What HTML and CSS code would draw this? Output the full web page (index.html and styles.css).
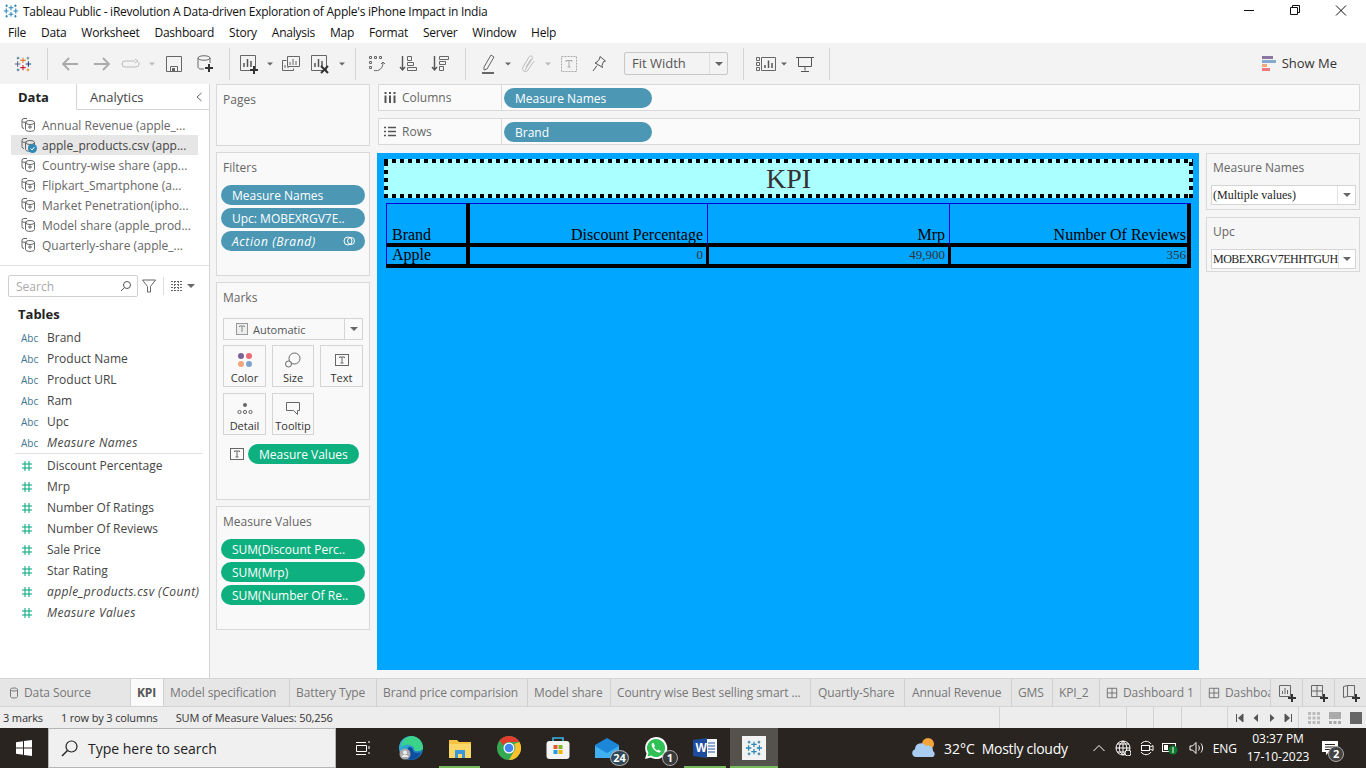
FILE: index.html
```html
<!DOCTYPE html>
<html lang="en">
<head>
    <meta charset="UTF-8">
    <title>Tableau Public - iRevolution</title>
    <link rel="stylesheet" href="styles.css">
</head>
<body>
    <svg class="defs" width="0" height="0">
        <symbol id="ds" viewBox="0 0 16 16">
            <g fill="none" stroke="#666" stroke-width="1">
                <path d="M7 1.500h-3a2 2 0 0 0-2 2v6a2 2 0 0 0 2 2"/>
                <path d="M2 4.500c1 1 3 1 5 .5"/>
                <ellipse cx="10" cy="5.500" rx="4.500" ry="2"/>
                <path d="M5.500 5.500v7c0 2.500 9 2.500 9 0v-7"/>
                <path d="M8 10h4M10 8v4"/>
            </g>
        </symbol>
        <symbol id="tlogo" viewBox="0 0 20 20">
            <g fill="none" stroke-width="1.200">
                <path d="M10 3v6M7 6h6" stroke="#e8762b"/>
                <path d="M10 11v6M7 14h6" stroke="#c72035"/>
                <path d="M4 7v6M1 10h6" stroke="#5b6591"/>
                <path d="M16 7v6M13 10h6" stroke="#1f447e"/>
                <path d="M4.500 2v3M3 3.500h3" stroke="#59879b"/>
                <path d="M15.500 2v3M14 3.500h3" stroke="#7099a6"/>
                <path d="M4.500 15v3M3 16.500h3" stroke="#5b879b"/>
                <path d="M15.500 15v3M14 16.500h3" stroke="#eb912b"/>
            </g>
        </symbol>
        <symbol id="tblue" viewBox="0 0 20 20">
            <g fill="none" stroke="#2f87b5" stroke-width="1.400">
                <path d="M10 3v6M7 6h6M10 11v6M7 14h6M4 7v6M1 10h6M16 7v6M13 10h6M4.500 2v3M3 3.500h3M15.500 2v3M14 3.500h3M4.500 15v3M3 16.500h3M15.500 15v3M14 16.500h3"/>
            </g>
        </symbol>
        <symbol id="hash" viewBox="0 0 12 12">
            <path d="M4 1v10M8 1v10M1 4h10M1 8h10" fill="none" stroke="#00a37a" stroke-width="1"/>
        </symbol>
        <symbol id="tbox" viewBox="0 0 16 16">
            <rect x="1.500" y="2.500" width="13" height="11" fill="none" stroke="#666"/>
            <path d="M5.500 6V5h5v1M8 5v6M6.500 11h3" fill="none" stroke="#666"/>
        </symbol>
        <symbol id="caret" viewBox="0 0 8 8">
            <path d="M0 2h8L4 6z" fill="#666"/>
        </symbol>
        <symbol id="dash" viewBox="0 0 14 14">
            <path d="M1.500 1.500h11v11h-11zM7 1.500v11M1.500 7h11" fill="none" stroke="#666"/>
        </symbol>
        <symbol id="plus" viewBox="0 0 8 8">
            <path d="M4 0v8M0 4h8" stroke="#333" stroke-width="2" fill="none"/>
        </symbol>
    </svg>

    <div class="titlebar">
        <svg class="title-logo" width="16" height="16"><use href="#tblue"/></svg>
        <span class="title-text">Tableau Public - iRevolution A Data-driven Exploration of Apple's iPhone Impact in India</span>
        <div class="win-btns">
            <svg width="46" height="22"><path d="M18 10.500h10" stroke="#111"/></svg>
            <svg width="46" height="22"><path d="M18.500 7.500h7v7h-7zM20.500 7.500v-2h7v7h-2" fill="none" stroke="#111"/></svg>
            <svg width="46" height="22"><path d="M18 5.500l10 10M28 5.500l-10 10" stroke="#111"/></svg>
        </div>
    </div>

    <div class="menubar">
        <span>File</span><span>Data</span><span>Worksheet</span><span>Dashboard</span><span>Story</span><span>Analysis</span><span>Map</span><span>Format</span><span>Server</span><span>Window</span><span>Help</span>
    </div>

    <div class="toolbar">
        <div class="tool w30"><svg width="18" height="18"><use href="#tlogo"/></svg></div>
        <div class="sep sep-a"></div>
        <div class="tool w32"><svg width="18" height="16"><path d="M17 8H2M8 2L2 8l6 6" fill="none" stroke="#aaa" stroke-width="1.800"/></svg></div>
        <div class="tool w32"><svg width="18" height="16"><path d="M1 8h15M10 2l6 6-6 6" fill="none" stroke="#aaa" stroke-width="1.800"/></svg></div>
        <div class="tool w26"><svg width="20" height="12"><path d="M14 3H4a3 3 0 0 0 0 6h11a3 3 0 0 0 3-3V4M14 1l3 2-3 2" fill="none" stroke="#bbb"/></svg></div>
        <div class="tool w16"><svg width="6" height="6"><use href="#caret" opacity=".4"/></svg></div>
        <div class="tool w28"><svg width="16" height="16"><path d="M.5.500h15v15H.5zM4.500 15.500v-5h7v5" fill="none" stroke="#666"/><rect x="6" y="12" width="3" height="3" fill="#666"/></svg></div>
        <div class="tool w34"><svg width="16" height="18"><path d="M1 3v9c0 1 1 2 3 2h3M13 3v5M1 3c0-3 12-3 12 0s-12 3-12 0z" fill="none" stroke="#666"/><path d="M12 9v8M8 13h8" stroke="#333" stroke-width="2"/></svg></div>
        <div class="sep"></div>
        <div class="tool w28"><svg width="20" height="20"><path d="M.5 1.500h15v15H.5z" fill="none" stroke="#666"/><path d="M4 13V9M7.500 13V5M11 13V7" stroke="#555" stroke-width="1.500"/><path d="M14 12v8M10 16h8" stroke="#333" stroke-width="2"/></svg></div>
        <div class="tool w12"><svg width="6" height="6"><use href="#caret"/></svg></div>
        <div class="tool w30"><svg width="18" height="16"><path d="M4.500 4.500h-4v10h11v-2M5.500.500h12v10h-12z" fill="none" stroke="#666"/><path d="M8 9V6M11 9V3M14 9V5M3 12V9M6 12v-1" stroke="#666"/></svg></div>
        <div class="tool w30"><svg width="20" height="20"><path d="M.5 1.500h15v15H.5z" fill="none" stroke="#666"/><path d="M4 13V9M7.500 13V5M11 13V7" stroke="#555" stroke-width="1.500"/><path d="M10 12l7 7M17 12l-7 7" stroke="#333" stroke-width="2"/></svg></div>
        <div class="tool w12"><svg width="6" height="6"><use href="#caret"/></svg></div>
        <div class="sep"></div>
        <div class="tool w30"><svg width="18" height="18"><path d="M1.500 1.500h2v2h-2zM6.500 1.500h2v2h-2zM11.500 1.500h2v2h-2zM1.500 6.500h2v2h-2zM1.500 11.500h2v2h-2zM6 15.500c5 1 9-2 9-8M13 9l2-2 2 2" fill="none" stroke="#666"/></svg></div>
        <div class="tool w32"><svg width="18" height="18"><path d="M3.500 1v14M1 12l2.500 3L6 12" fill="none" stroke="#555" stroke-width="1.400"/><path d="M8.500 1.500h4v4h-4zM8.500 7.500h6v3h-6zM8.500 12.500h9v3h-9z" fill="none" stroke="#666"/></svg></div>
        <div class="tool w32"><svg width="18" height="18"><path d="M3.500 1v14M1 12l2.500 3L6 12" fill="none" stroke="#555" stroke-width="1.400"/><path d="M8.500 1.500h9v3h-9zM8.500 6.500h6v3h-6zM8.500 11.500h4v4h-4z" fill="none" stroke="#666"/></svg></div>
        <div class="sep sep-b"></div>
        <div class="tool w28"><svg width="14" height="20"><path d="M3 13L10 1l3 2-7 12-3 1z" fill="none" stroke="#666"/><path d="M1 19h12" stroke="#666" stroke-width="2"/></svg></div>
        <div class="tool w12"><svg width="6" height="6"><use href="#caret"/></svg></div>
        <div class="tool w28"><svg width="14" height="18"><path d="M4 15L11 4c2-3-2-4-3-2L2 12c-2 4 3 6 5 3l6-9M5 12l5-8" fill="none" stroke="#bbb"/></svg></div>
        <div class="tool w12"><svg width="6" height="6"><use href="#caret" opacity=".4"/></svg></div>
        <div class="tool w30"><svg width="16" height="16"><rect x=".5" y=".5" width="15" height="15" fill="none" stroke="#aaa" stroke-dasharray="2 1"/><path d="M5 6V4.500h6V6M8 4.500V11M6.500 11h3" fill="none" stroke="#aaa"/></svg></div>
        <div class="tool w30"><svg width="14" height="16"><path d="M8 .500l5.500 4.500-2 .5-1.500 4 .5 2L6 8.500 3 7l2-1 2.500-3zM5 9.500L1 15" fill="none" stroke="#555"/></svg></div>
        <div class="fit-select"><span>Fit Width</span><i><svg width="8" height="8"><use href="#caret"/></svg></i></div>
        <div class="sep sep-c"></div>
        <div class="tool w24"><svg width="20" height="14"><path d="M.5.500h3v3h-3zM.5 5.500h3v3h-3zM.5 10.500h3v3h-3zM5.500.500h14v13h-14z" fill="none" stroke="#666"/><path d="M9 11V8M12.500 11V3.500M16 11V6" stroke="#555" stroke-width="1.500"/></svg></div>
        <div class="tool w12"><svg width="6" height="6"><use href="#caret"/></svg></div>
        <div class="tool w30"><svg width="18" height="16"><path d="M0 1.500h18M2.500 1.500v9h13v-9M9 10.500v4M5 15.500h8" fill="none" stroke="#555"/></svg></div>
        <div class="sep sep-b"></div>
        <div class="show-me">
            <svg width="14" height="16"><rect y="0" width="11" height="3" fill="#8a75a3"/><rect y="4" width="14" height="3" fill="#84a9cf"/><rect y="8" width="5" height="3" fill="#f2a679"/><rect y="12" width="8" height="3" fill="#f0787f"/></svg>
            <span>Show Me</span>
        </div>
    </div>

    <div class="main">
        <aside class="side">
            <div class="side-tabs">
                <div class="side-tab active">Data</div>
                <div class="side-tab">Analytics</div>
                <svg width="8" height="10" class="collapse"><path d="M6.500 1L2 5l4.500 4" fill="none" stroke="#666"/></svg>
            </div>
            <ul class="sources">
                <li><svg width="16" height="16"><use href="#ds"/></svg>Annual Revenue (apple_...</li>
                <li class="current"><svg width="16" height="16"><use href="#ds"/></svg><svg class="tick" width="9" height="9"><circle cx="4.500" cy="4.500" r="4.500" fill="#2f87b5"/><path d="M2.500 4.500l1.500 1.500 2.500-3" fill="none" stroke="#fff"/></svg>apple_products.csv (app...</li>
                <li><svg width="16" height="16"><use href="#ds"/></svg>Country-wise share (app...</li>
                <li><svg width="16" height="16"><use href="#ds"/></svg>Flipkart_Smartphone (a...</li>
                <li><svg width="16" height="16"><use href="#ds"/></svg>Market Penetration(ipho...</li>
                <li><svg width="16" height="16"><use href="#ds"/></svg>Model share (apple_prod...</li>
                <li><svg width="16" height="16"><use href="#ds"/></svg>Quarterly-share (apple_...</li>
            </ul>
            <div class="search-row">
                <div class="search"><span>Search</span><svg width="12" height="12"><circle cx="7" cy="5" r="3.500" fill="none" stroke="#555"/><path d="M4.500 7.500L1 11" stroke="#555"/></svg></div>
                <svg width="14" height="14"><path d="M.5 1h13L8.500 7.500V13h-3V7.500z" fill="none" stroke="#666"/></svg>
                <i class="search-sep"></i>
                <svg width="12" height="10"><path d="M0 .5h12M0 3.500h12M0 6.500h12M0 9.500h12M3.500 0v10M7.500 0v10" stroke="#666" stroke-dasharray="2 1" fill="none"/></svg>
                <svg width="8" height="8"><use href="#caret"/></svg>
            </div>
            <h3 class="tables">Tables</h3>
            <ul class="fields">
                <li><span class="abc">Abc</span>Brand</li>
                <li><span class="abc">Abc</span>Product Name</li>
                <li><span class="abc">Abc</span>Product URL</li>
                <li><span class="abc">Abc</span>Ram</li>
                <li><span class="abc">Abc</span>Upc</li>
                <li class="it"><span class="abc">Abc</span>Measure Names</li>
            </ul>
            <ul class="fields measures">
                <li><span class="num"><svg width="12" height="12"><use href="#hash"/></svg></span>Discount Percentage</li>
                <li><span class="num"><svg width="12" height="12"><use href="#hash"/></svg></span>Mrp</li>
                <li><span class="num"><svg width="12" height="12"><use href="#hash"/></svg></span>Number Of Ratings</li>
                <li><span class="num"><svg width="12" height="12"><use href="#hash"/></svg></span>Number Of Reviews</li>
                <li><span class="num"><svg width="12" height="12"><use href="#hash"/></svg></span>Sale Price</li>
                <li><span class="num"><svg width="12" height="12"><use href="#hash"/></svg></span>Star Rating</li>
                <li class="it"><span class="num"><svg width="12" height="12"><use href="#hash"/></svg></span>apple_products.csv (Count)</li>
                <li class="it"><span class="num"><svg width="12" height="12"><use href="#hash"/></svg></span>Measure Values</li>
            </ul>
        </aside>

        <div class="cards">
            <section class="card pages"><h4>Pages</h4></section>
            <section class="card filters">
                <h4>Filters</h4>
                <div class="pill blue">Measure Names</div>
                <div class="pill blue">Upc: MOBEXRGV7E..</div>
                <div class="pill blue it">Action (Brand)<svg width="12" height="12"><circle cx="5" cy="6" r="4" fill="none" stroke="#fff"/><circle cx="8" cy="6" r="3.500" fill="none" stroke="#fff"/></svg></div>
            </section>
            <section class="card marks">
                <h4>Marks</h4>
                <div class="mark-select">
                    <svg width="12" height="12"><rect x=".5" y=".5" width="11" height="11" fill="#eee" stroke="#999"/><path d="M3.500 4V3h5v1M6 3v6" stroke="#888" fill="none"/></svg>
                    <span>Automatic</span>
                    <i><svg width="8" height="8"><use href="#caret"/></svg></i>
                </div>
                <div class="mark-grid">
                    <div class="mark-btn"><svg width="16" height="16"><circle cx="4" cy="4" r="3" fill="#7b6294"/><circle cx="12" cy="4" r="3" fill="#ee6a78"/><circle cx="4" cy="12" r="3" fill="#f2a679"/><circle cx="12" cy="12" r="3" fill="#7da3cf"/></svg><span>Color</span></div>
                    <div class="mark-btn"><svg width="16" height="16"><circle cx="9.500" cy="6.500" r="5.500" fill="#f9f9f9" stroke="#666"/><circle cx="3.500" cy="12" r="3" fill="#f9f9f9" stroke="#666"/></svg><span>Size</span></div>
                    <div class="mark-btn"><svg width="16" height="16"><use href="#tbox"/></svg><span>Text</span></div>
                    <div class="mark-btn"><svg width="16" height="16"><circle cx="8" cy="5" r="2" fill="#666"/><circle cx="2.500" cy="12" r="1.600" fill="none" stroke="#666"/><circle cx="8" cy="12" r="1.600" fill="none" stroke="#666"/><circle cx="13.500" cy="12" r="1.600" fill="none" stroke="#666"/></svg><span>Detail</span></div>
                    <div class="mark-btn"><svg width="16" height="16"><path d="M1.500 2.500h13v8h-2v4l-4-4h-7z" fill="none" stroke="#666"/></svg><span>Tooltip</span></div>
                </div>
                <div class="mark-pill">
                    <svg width="16" height="16"><use href="#tbox"/></svg>
                    <div class="pill green">Measure Values</div>
                </div>
            </section>
            <section class="card values">
                <h4>Measure Values</h4>
                <div class="pill green">SUM(Discount Perc..</div>
                <div class="pill green">SUM(Mrp)</div>
                <div class="pill green">SUM(Number Of Re..</div>
            </section>
        </div>

        <div class="work">
            <div class="shelf">
                <div class="shelf-label"><svg width="12" height="11"><path d="M1.500 0v2M6 0v2M10.500 0v2M1.500 3.500V11M6 3.500V11M10.500 3.500V11" stroke="#555" stroke-width="2"/></svg>Columns</div>
                <div class="shelf-body"><div class="pill blue wide">Measure Names</div></div>
            </div>
            <div class="shelf">
                <div class="shelf-label"><svg width="12" height="11"><path d="M0 1.500h2M4 1.500h8M0 5.500h2M4 5.500h8M0 9.500h2M4 9.500h8" stroke="#555" stroke-width="1.600"/></svg>Rows</div>
                <div class="shelf-body"><div class="pill blue wide">Brand</div></div>
            </div>
            <div class="work-body">
                <div class="view">
                    <div class="view-title">KPI</div>
                    <div class="kpi">
                        <div class="hd col-a">Brand</div>
                        <div class="hd col-b right">Discount Percentage</div>
                        <div class="hd col-c right">Mrp</div>
                        <div class="hd col-d right">Number Of Reviews</div>
                        <div class="cell col-a big">Apple</div>
                        <div class="cell col-b right">0</div>
                        <div class="cell col-c right">49,900</div>
                        <div class="cell col-d right">356</div>
                    </div>
                </div>
                <div class="right-cards">
                    <section class="card qf">
                        <h4>Measure Names</h4>
                        <div class="qf-select"><span>(Multiple values)</span><i><svg width="8" height="8"><use href="#caret"/></svg></i></div>
                    </section>
                    <section class="card qf">
                        <h4>Upc</h4>
                        <div class="qf-select"><span class="qf-code">MOBEXRGV7EHHTGUH</span><i><svg width="8" height="8"><use href="#caret"/></svg></i></div>
                    </section>
                </div>
            </div>
        </div>
    </div>

    <div class="tabs">
        <div class="tab t-source"><svg width="12" height="12"><path d="M2.500 2.500v7c0 2 7 2 7 0v-7M2.500 2.500c0-2 7-2 7 0s-7 2-7 0z" fill="none" stroke="#777"/></svg>Data Source</div>
        <div class="tab t-kpi active">KPI</div>
        <div class="tab t-model">Model specification</div>
        <div class="tab t-batt">Battery Type</div>
        <div class="tab t-brand">Brand price comparision</div>
        <div class="tab t-share">Model share</div>
        <div class="tab t-country">Country wise Best selling smart ...</div>
        <div class="tab t-quart">Quartly-Share</div>
        <div class="tab t-annual">Annual Revenue</div>
        <div class="tab t-gms">GMS</div>
        <div class="tab t-kpi2">KPI_2</div>
        <div class="tab t-dash"><svg width="12" height="12"><use href="#dash"/></svg>Dashboard 1</div>
        <div class="tab t-dash2"><svg width="12" height="12"><use href="#dash"/></svg>Dashboard 2</div>
        <div class="tab-add"><svg width="18" height="18"><path d="M1.500 1.500h11v11h-11zM4.500 10V7M7 10V4M9.500 10V6" fill="none" stroke="#666"/><use href="#plus" x="10" y="10" width="8" height="8"/></svg></div>
        <div class="tab-add"><svg width="18" height="18"><path d="M1.500 1.500h11v11h-11zM7 1.500v11M1.500 7h11" fill="none" stroke="#666"/><use href="#plus" x="10" y="10" width="8" height="8"/></svg></div>
        <div class="tab-add"><svg width="18" height="18"><path d="M1.500 2.500l4-1v11l-4 1zM5.500 1.500h7v11h-7" fill="none" stroke="#666"/><use href="#plus" x="10" y="10" width="8" height="8"/></svg></div>
    </div>

    <div class="status">
        <div class="st-text">
            <span>3 marks</span>
            <span>1 row by 3 columns</span>
            <span>SUM of Measure Values: 50,256</span>
        </div>
        <div class="st-cell c127"></div>
        <div class="st-cell c27"></div>
        <div class="st-cell c28"></div>
        <div class="st-cell c46"></div>
        <div class="st-cell pager">
            <svg width="10" height="10"><path d="M1.500 1v8M8 1v8L3.500 5z" stroke="#555" fill="#555"/></svg>
            <svg width="10" height="10"><path d="M7 1v8L2.500 5z" fill="#555"/></svg>
            <svg width="10" height="10"><path d="M3 1v8l4.500-4z" fill="#555"/></svg>
            <svg width="10" height="10"><path d="M8.500 1v8M2 1v8l4.500-4z" stroke="#555" fill="#555"/></svg>
        </div>
        <div class="st-cell sizes">
            <svg width="12" height="12"><path d="M0 0h3v3H0zM4.500 0h3v3h-3zM9 0h3v3H9zM0 4.500h3v3H0zM4.500 4.500h3v3h-3zM9 4.500h3v3H9zM0 9h3v3H0zM4.500 9h3v3h-3zM9 9h3v3H9z" fill="#bbb"/></svg>
            <svg width="12" height="12"><path d="M0 0h12v7H0zM0 9h3v3H0zM4.500 9h3v3h-3zM9 9h3v3H9z" fill="#aaa"/></svg>
            <svg width="12" height="12"><rect width="12" height="12" fill="#666"/></svg>
        </div>
    </div>

    <div class="taskbar">
        <div class="start"><svg width="16" height="16"><path d="M0 2.200l7-1v6.300H0zM8 1l8-1v7.500H8zM0 8.500h7v6.300l-7-1zM8 8.500h8V16l-8-1z" fill="#fff"/></svg></div>
        <div class="task-search">
            <svg width="17" height="17"><circle cx="10.500" cy="6.500" r="5.500" fill="none" stroke="#222" stroke-width="1.200"/><path d="M6.500 10.500L1 16" stroke="#222" stroke-width="1.400"/></svg>
            <span>Type here to search</span>
        </div>
        <div class="task-icons">
            <div class="task-app"><svg width="16" height="16"><path d="M1 2.500h10M1 14.500h10M1.500 5.500h10v6h-10zM14 1v2M14 6v3M14 12v2" fill="none" stroke="#fff"/></svg></div>
            <div class="task-app a-edge"><svg width="24" height="24"><defs><linearGradient id="eg" x1="0" y1="0" x2="1" y2="1"><stop offset="0" stop-color="#37c4d8"/><stop offset="1" stop-color="#1a66c0"/></linearGradient></defs><circle cx="12" cy="12" r="12" fill="url(#eg)"/><path d="M12 0a12 12 0 0 1 12 13c-3 3-9 3-9 0 0-4-8-6-13-2A12 12 0 0 1 12 0z" fill="#3bd28a"/><path d="M10 11c3 0 4 2 4 3 0 3 5 4 8 2a12 12 0 0 1-10 8c-5 0-6-9-2-13z" fill="#0f4d9e"/><circle cx="6" cy="18" r="5.500" fill="#aaa"/><circle cx="6" cy="16.500" r="2" fill="#eee"/><path d="M2.500 21c1-3 6-3 7 0z" fill="#eee"/></svg></div>
            <div class="task-app on"><svg width="22" height="20"><path d="M0 2h8l2 2h12v16H0z" fill="#f5c242"/><path d="M0 6h22v14H0z" fill="#fbd768"/><path d="M6 12h10v8h-3v-4H9v4H6z" fill="#3a98d8"/></svg></div>
            <div class="task-app"><svg width="24" height="24"><circle cx="12" cy="12" r="12" fill="#34a853"/><path d="M12 0a12 12 0 0 1 10.400 6H12a6 6 0 0 0-5.600 3.600L2.600 4.600A12 12 0 0 1 12 0z" fill="#e33b2e"/><path d="M22.400 6A12 12 0 0 1 12 24l5.200-9A6 6 0 0 0 17 8z" fill="#fbc02d"/><circle cx="12" cy="12" r="5.500" fill="#fff"/><circle cx="12" cy="12" r="4.300" fill="#4285f4"/></svg></div>
            <div class="task-app"><svg width="24" height="24"><path d="M7 5V2h10v3" fill="none" stroke="#38b4e8" stroke-width="1.600"/><rect x="0.500" y="5" width="23" height="18" rx="3" fill="#f4f4f4"/><rect x="7.500" y="9" width="4" height="4" fill="#e8562e"/><rect x="12.500" y="9" width="4" height="4" fill="#7cb82f"/><rect x="7.500" y="14" width="4" height="4" fill="#1f9de0"/><rect x="12.500" y="14" width="4" height="4" fill="#f4b400"/></svg></div>
            <div class="task-app"><svg width="24" height="20"><path d="M0 7l12-7 12 7v13H0z" fill="#1c86d8"/><path d="M0 8l12 7 12-7v12H0z" fill="#3fb0f0"/></svg><b class="count">24</b></div>
            <div class="task-app"><svg width="24" height="24"><path d="M12 1a11 11 0 0 0-9.400 16.500L1 23l5.700-1.500A11 11 0 1 0 12 1z" fill="#fff"/><path d="M12 3a9 9 0 0 0-7.500 14l-1 3.500 3.600-1A9 9 0 1 0 12 3z" fill="#2fc155"/><path d="M8.500 7c-2 2 0 5 2 7s5 3.500 6.500 1.500l-2.500-2-1 1c-1.500-.5-3-2-3.500-3.500l1-1-1.500-3z" fill="#fff"/></svg><b class="count small">1</b></div>
            <div class="task-app a-word on"><svg width="24" height="20"><rect x="8" y="1" width="16" height="18" fill="#f4f6fb"/><path d="M15 5h7M15 8h7M15 11h7M15 14h7" stroke="#2b5caa"/><path d="M0 2l14-2v20L0 18z" fill="#1e4c9c"/><text x="2.500" y="14" class="w-letter">W</text></svg></div>
            <div class="task-app a-tab on"><div class="tab-tile"><svg width="18" height="18"><use href="#tblue"/></svg></div></div>
        </div>
        <div class="tray">
            <svg class="tr-weather" width="24" height="22"><circle cx="16" cy="7" r="6" fill="#f2a33a"/><path d="M4 20a4 4 0 0 1-1-7.800A6 6 0 0 1 14 9a5 5 0 0 1 7 5 3.500 3.500 0 0 1 0 6z" fill="#a9cdf0"/></svg>
            <span class="tr-temp">32°C</span>
            <span class="tr-cond">Mostly cloudy</span>
            <svg class="tr-chev" width="12" height="8"><path d="M.5 7L6 1.500 11.500 7" fill="none" stroke="#fff"/></svg>
            <svg class="tr-globe" width="16" height="16"><circle cx="8" cy="8" r="7" fill="none" stroke="#fff"/><path d="M1 8h14M8 1v14M2 4h12M2 12h12M8 1c-5 4-5 10 0 14M8 1c5 4 5 10 0 14" fill="none" stroke="#fff"/><circle cx="13" cy="13" r="3" fill="#2a2420" stroke="#fff"/></svg>
            <svg class="tr-meet" width="14" height="16"><path d="M1 4a6 6 0 0 1 10 0M1 12a6 6 0 0 0 10 0" fill="none" stroke="#fff"/><rect x="1.500" y="5.500" width="8" height="5" fill="none" stroke="#fff"/><path d="M10 7l3-1.500v5L10 9" fill="none" stroke="#fff"/></svg>
            <svg class="tr-batt" width="16" height="14"><rect x=".5" y="2.500" width="13" height="8" fill="none" stroke="#fff"/><rect x="2" y="4" width="4" height="5" fill="#fff"/><circle cx="11" cy="9" r="4.500" fill="#0c7a2e"/><path d="M11 6v6" stroke="#fff"/></svg>
            <svg class="tr-sound" width="16" height="14"><path d="M1 5h2.500L7 1.500v11L3.500 9H1zM9.500 4.500c1 1.500 1 3.500 0 5M12 2.500c2 3 2 6 0 9" fill="none" stroke="#fff"/></svg>
            <span class="tr-lang">ENG</span>
            <div class="tr-clock"><span>03:37 PM</span><span>17-10-2023</span></div>
            <div class="tr-note"><svg width="16" height="15"><path d="M0 0h16v11H7l-3 3v-3H0z" fill="#fff"/><path d="M3 3.500h10M3 6h10M3 8.500h6" stroke="#2a2420"/></svg><b class="count note">2</b></div>
        </div>
    </div>
</body>
</html>
```

FILE: styles.css
```css
* {
    box-sizing: border-box;
}
html, body {
    margin: 0;
    height: 768px;
    overflow: hidden;
}
body {
    width: 1366px;
    display: flex;
    flex-direction: column;
    background-color: #f5f5f5;
    font-family: "Open Sans", "Liberation Sans", sans-serif;
    font-size: 13px;
    color: #333;
}
ul {
    list-style: none;
    margin: 0;
    padding: 0;
}
h3, h4 {
    margin: 0;
}
i, b {
    font-style: normal;
}
svg {
    display: block;
    flex: none;
}
.defs {
    position: absolute;
}
.it {
    font-style: italic;
    letter-spacing: .4px;
}

/* title + menu */
.titlebar {
    height: 22px;
    display: flex;
    align-items: center;
    padding-left: 3px;
    background-color: #fff;
}
.title-logo {
    margin-right: 4px;
}
.title-text {
    font-size: 12px;
    letter-spacing: -.25px;
    color: #111;
    white-space: nowrap;
}
.win-btns {
    display: flex;
    margin-left: auto;
    margin-right: 2px;
}
.menubar {
    height: 21px;
    display: flex;
    align-items: center;
    gap: 15px;
    padding-left: 8px;
    background-color: #fff;
    font-size: 12px;
    letter-spacing: -.25px;
    color: #111;
}

/* toolbar */
.toolbar {
    height: 41px;
    display: flex;
    align-items: center;
    padding-left: 8px;
    background-color: #f3f3f3;
}
.tool {
    height: 30px;
    display: flex;
    align-items: center;
    justify-content: center;
    flex: none;
}
.w12 { width: 12px; }
.w16 { width: 16px; }
.w24 { width: 24px; }
.w26 { width: 26px; }
.w28 { width: 28px; }
.w30 { width: 30px; }
.w32 { width: 32px; }
.w34 { width: 34px; }
.sep {
    width: 1px;
    height: 32px;
    flex: none;
    margin: 0 6px 0 7px;
    background-color: #d4d4d4;
}
.sep-a {
    margin-left: 9px;
}
.sep-b {
    margin-left: 9px;
    margin-right: 8px;
}
.sep-c {
    margin: 0 10px 0 15px;
}
.fit-select {
    width: 104px;
    height: 23px;
    margin-left: 10px;
    display: flex;
    align-items: center;
    border: 1px solid #c8c8c8;
    border-radius: 2px;
    padding-left: 7px;
    color: #555;
}
.fit-select span {
    flex: 1;
    margin-top: -2px;
}
.fit-select i {
    width: 18px;
    height: 100%;
    border-left: 1px solid #ddd;
    display: flex;
    align-items: center;
    justify-content: center;
}
.show-me {
    margin-left: auto;
    margin-right: 29px;
    display: flex;
    align-items: center;
    gap: 6px;
}
.show-me span {
    margin-top: -2px;
}

/* main */
.main {
    height: 594px;
    display: flex;
}
.side {
    width: 210px;
    flex: none;
    background-color: #fff;
    border-right: 1px solid #d4d4d4;
}
.side-tabs {
    height: 26px;
    display: flex;
    align-items: center;
    border-bottom: 1px solid #d4d4d4;
}
.side-tab {
    height: 26px;
    padding-top: 4px;
    font-size: 13px;
}
.side-tab.active {
    width: 77px;
    padding-left: 18px;
    font-weight: 700;
    border-right: 1px solid #d4d4d4;
    border-bottom: 1px solid #fff;
    background-color: #fff;
    color: #222;
}
.side-tab:not(.active) {
    padding-left: 13px;
    color: #444;
}
.collapse {
    margin-left: auto;
    margin-right: 6px;
}
.sources {
    padding: 5px 0 0 11px;
    height: 156px;
    border-bottom: 1px solid #e2e2e2;
    width: 209px;
    font-size: 12px;
    color: #666;
}
.sources li {
    position: relative;
    height: 20px;
    width: 187px;
    display: flex;
    align-items: center;
    gap: 6px;
    padding-left: 9px;
    white-space: nowrap;
}
.sources li.current {
    background-color: #e6e6e6;
    color: #444;
}
.tick {
    position: absolute;
    left: 17px;
    top: 9px;
}
.search-row {
    height: 22px;
    margin: 9px 0 0 8px;
    display: flex;
    align-items: center;
    gap: 4px;
}
.search {
    width: 130px;
    height: 22px;
    display: flex;
    align-items: center;
    justify-content: space-between;
    padding: 0 5px 0 7px;
    border: 1px solid #cfcfcf;
    border-radius: 2px;
    color: #aaa;
    font-size: 12px;
}
.search-sep {
    width: 1px;
    height: 18px;
    margin: 0 3px;
    background-color: #ddd;
}
.tables {
    margin: 8px 0 4px 18px;
    font-size: 13px;
    line-height: 18px;
    font-weight: 700;
    color: #222;
}
.fields {
    font-size: 12px;
    color: #444;
}
.fields li {
    height: 21px;
    display: flex;
    align-items: center;
    padding-left: 21px;
    white-space: nowrap;
}
.fields.measures {
    padding-top: 1px;
    border-top: 1px solid #e2e2e2;
    margin-left: 15px;
    margin-right: 6px;
}
.fields.measures li {
    padding-left: 6px;
}
.abc {
    width: 26px;
    font-size: 10px;
    font-style: normal;
    letter-spacing: 0;
    color: #3f7690;
}
.num {
    width: 26px;
}

/* shelves and cards */
.cards {
    width: 167px;
    flex: none;
    padding-left: 6px;
    display: flex;
    flex-direction: column;
    gap: 6px;
}
.card {
    width: 154px;
    background-color: #f9f9f9;
    border: 1px solid #d9d9d9;
    padding: 7px 4px 0 6px;
}
.card h4 {
    font-size: 12px;
    font-weight: 400;
    color: #666;
    line-height: 16px;
}
.pages {
    height: 62px;
}
.filters {
    height: 124px;
}
.filters h4 {
    margin-bottom: 9px;
}
.marks {
    height: 218px;
}
.values {
    height: 124px;
}
.values h4 {
    margin-bottom: 9px;
}
.pill {
    height: 20px;
    border-radius: 10px;
    padding: 0 0 0 11px;
    display: flex;
    align-items: center;
    justify-content: space-between;
    color: #fff;
    font-size: 12px;
    margin: 0 0 3px -2px;
    white-space: nowrap;
}
.pill.it {
    letter-spacing: .6px;
}
.pill svg {
    margin-right: 10px;
}
.blue {
    background-color: #4b97b4;
}
.green {
    background-color: #0fb07f;
}
.mark-select {
    width: 140px;
    height: 22px;
    margin: 12px 0 5px 0;
    display: flex;
    align-items: center;
    border: 1px solid #d4d4d4;
    padding-left: 12px;
    font-size: 11px;
    color: #555;
}
.mark-select span {
    flex: 1;
    margin-left: 5px;
}
.mark-select i {
    width: 18px;
    height: 100%;
    border-left: 1px solid #d4d4d4;
    display: flex;
    align-items: center;
    justify-content: center;
}
.mark-grid {
    display: grid;
    grid-template-columns: 43px 42px 43px;
    grid-auto-rows: 42px;
    column-gap: 6px;
    row-gap: 6px;
}
.mark-btn {
    display: flex;
    flex-direction: column;
    align-items: center;
    padding-top: 6px;
    border: 1px solid #d4d4d4;
    font-size: 11px;
    color: #333;
}
.mark-btn span {
    margin-top: 3px;
    line-height: 14px;
}
.mark-pill {
    display: flex;
    align-items: center;
    gap: 3px;
    margin: 9px 0 0 6px;
}
.mark-pill .pill {
    width: 111px;
    margin: 0;
}

.work {
    flex: 1;
    min-width: 0;
    padding-right: 6px;
}
.shelf {
    height: 27px;
    margin-left: 1px;
    margin-bottom: 7px;
    display: flex;
    background-color: #fafafa;
    border: 1px solid #d9d9d9;
}
.shelf-label {
    width: 123px;
    display: flex;
    align-items: center;
    gap: 6px;
    padding-left: 5px;
    border-right: 1px solid #d9d9d9;
    font-size: 12px;
    color: #666;
}
.shelf-body {
    padding: 3px 0 0 2px;
}
.wide {
    width: 148px;
    margin: 0;
}
.work-body {
    display: flex;
    gap: 7px;
    margin-top: 8px;
    height: 517px;
}
.view {
    width: 822px;
    flex: none;
    padding: 6px 6px 6px 7px;
    background-color: #00a6ff;
    font-family: "Liberation Serif", serif;
    color: #000;
}
/* square dots, a dotted border would draw them round */
.view-title {
    height: 39px;
    background-color: #aaffff;
    background-image:
        repeating-linear-gradient(90deg, #000 0 4px, transparent 4px 8px),
        repeating-linear-gradient(90deg, #000 0 4px, transparent 4px 8px),
        repeating-linear-gradient(0deg, #000 0 4px, transparent 4px 8px),
        repeating-linear-gradient(0deg, #000 0 4px, transparent 4px 8px);
    background-size: 100% 4px, 100% 4px, 4px 100%, 4px 100%;
    background-position: 0 0, 0 100%, 0 0, 100% 0;
    background-repeat: no-repeat;
    text-align: center;
    font-size: 28px;
    line-height: 39px;
    color: #333;
}
.kpi {
    margin: 5px 0 0 2px;
    width: 805px;
    height: 65px;
    display: grid;
    grid-template-columns: 84px 238px 242px 241px;
    grid-template-rows: 44px 17px;
    border-bottom: 4px solid #000;
    border-right: 4px solid #000;
}
.hd {
    height: 44px;
    padding: 0 4px 0 5px;
    display: flex;
    align-items: flex-end;
    font-size: 16px;
    line-height: 17px;
    border-top: 1px solid #0000e0;
    border-right: 1px solid #0000e0;
    border-bottom: 4px solid #000;
}
.hd.col-a {
    border-left: 1px solid #0000e0;
    border-right: 4px solid #000;
}
.hd.col-d {
    border-right: 0;
    padding-right: 5px;
}
.cell {
    height: 17px;
    padding: 0 3px 0 5px;
    margin-right: -1px;
    font-size: 13px;
    line-height: 16px;
    color: #333;
    border-right: 3px solid #000;
}
.cell.col-a {
    margin-right: 0;
    border-left: 1px solid #0000e0;
    border-right: 4px solid #000;
}
.cell.col-d {
    margin-right: 0;
    border-right: 0;
    padding-right: 5px;
}
.big {
    font-size: 16px;
    color: #000;
}
.right {
    justify-content: flex-end;
    text-align: right;
}
.right-cards {
    display: flex;
    flex-direction: column;
    gap: 7px;
}
.qf {
    padding: 6px 3px 0 6px;
    background-color: #f6f6f6;
    height: 57px;
}
.qf + .qf {
    height: 55px;
}
.qf-select {
    width: 145px;
    height: 20px;
    margin: 9px 0 0 -2px;
    display: flex;
    align-items: center;
    padding-left: 1px;
    background-color: #fff;
    border: 1px solid #d4d4d4;
    font-family: "Liberation Serif", serif;
    font-size: 12px;
    color: #222;
    white-space: nowrap;
}
.qf-select span {
    flex: 1;
}
.qf-select .qf-code {
    letter-spacing: -.5px;
}
.qf-select i {
    width: 18px;
    height: 100%;
    border-left: 1px solid #e4e4e4;
    display: flex;
    align-items: center;
    justify-content: center;
}

/* sheet tabs */
.tabs {
    height: 29px;
    display: flex;
    background-color: #e6e6e6;
    border-top: 1px solid #d4d4d4;
    border-bottom: 1px solid #d4d4d4;
    font-size: 12px;
    letter-spacing: -.1px;
    color: #777;
}
.tab {
    display: flex;
    align-items: center;
    gap: 5px;
    padding-left: 6px;
    border-right: 1px solid #d0d0d0;
    white-space: nowrap;
    overflow: hidden;
    flex: none;
}
.tab.active {
    background-color: #fafafa;
    font-weight: 700;
    color: #555;
}
.t-source { width: 131px; padding-left: 8px; gap: 4px; }
.t-kpi { width: 33px; }
.t-model { width: 126px; }
.t-batt { width: 87px; }
.t-brand { width: 151px; }
.t-share { width: 83px; }
.t-country { width: 200px; }
.t-quart { width: 94px; padding-left: 7px; }
.t-annual { width: 107px; padding-left: 7px; }
.t-gms { width: 41px; }
.t-kpi2 { width: 47px; }
.t-dash { width: 101px; }
.t-dash2 { width: 69px; padding-left: 7px; border-right: 0; }
.tab-add {
    width: 32px;
    display: flex;
    align-items: center;
    justify-content: center;
    border-left: 1px solid #d0d0d0;
}

/* status bar */
.status {
    height: 21px;
    display: flex;
    background-color: #ededed;
    font-size: 11px;
    letter-spacing: -.15px;
    color: #333;
}
.st-text {
    width: 999px;
    flex: none;
    display: flex;
    align-items: center;
    gap: 18px;
    padding-left: 3px;
    white-space: nowrap;
}
.st-cell {
    flex: none;
    border-left: 1px solid #d4d4d4;
}
.c127 { width: 127px; }
.c27 { width: 27px; }
.c28 { width: 28px; }
.c46 { width: 46px; }
.pager {
    width: 71px;
    display: flex;
    align-items: center;
    gap: 6px;
    padding-left: 7px;
}
.sizes {
    flex: 1;
    display: flex;
    align-items: center;
    gap: 9px;
    padding-left: 9px;
}

/* windows taskbar */
.taskbar {
    height: 40px;
    display: flex;
    align-items: center;
    background-color: #2a2420;
    color: #fff;
}
.start {
    width: 48px;
    height: 40px;
    flex: none;
    display: flex;
    align-items: center;
    justify-content: center;
}
.task-search {
    width: 288px;
    height: 40px;
    flex: none;
    display: flex;
    align-items: center;
    gap: 10px;
    padding-left: 12px;
    background-color: #f0f0f0;
    border: 1px solid #b5b5b5;
    color: #222;
    font-size: 14px;
}
.task-icons {
    flex: none;
    display: flex;
    margin-left: 2px;
}
.task-app {
    width: 49px;
    height: 40px;
    display: flex;
    align-items: center;
    justify-content: center;
    position: relative;
}
.task-app.on::after {
    content: "";
    position: absolute;
    left: 4px;
    right: 4px;
    bottom: 0;
    height: 2px;
    background-color: #76b95b;
}
.a-edge {
    width: 48px;
}
.a-word {
    width: 50px;
}
.a-tab {
    width: 48px;
    background-color: #55514c;
}
.a-tab.on::after {
    left: 0;
    right: 0;
}
.tab-tile {
    width: 24px;
    height: 24px;
    background-color: #f2f2f2;
    display: flex;
    align-items: center;
    justify-content: center;
}
.w-letter {
    font-family: "Liberation Sans", sans-serif;
    font-size: 12px;
    font-weight: 700;
    fill: #fff;
}
.count {
    position: absolute;
    right: 2px;
    bottom: 2px;
    width: 19px;
    height: 16px;
    border-radius: 50%;
    border: 1px solid #aaa;
    background-color: #2f4858;
    text-align: center;
    font-size: 11px;
    line-height: 14px;
    color: #fff;
}
.count.small {
    width: 16px;
    background-color: #3a3a3a;
}
.count.note {
    right: -6px;
    bottom: -6px;
    width: 16px;
    background-color: #444;
}
.tray {
    flex: 1;
    display: flex;
    align-items: center;
    font-size: 14px;
    white-space: nowrap;
}
.tr-weather {
    margin-left: 134px;
}
.tr-temp {
    margin-left: 8px;
}
.tr-cond {
    margin-left: 7px;
    letter-spacing: -.3px;
}
.tr-chev {
    margin-left: 25px;
}
.tr-globe {
    margin-left: 10px;
}
.tr-meet {
    margin-left: 9px;
}
.tr-batt {
    margin-left: 8px;
}
.tr-sound {
    margin-left: 11px;
}
.tr-lang {
    margin-left: 8px;
    font-size: 12px;
}
.tr-clock {
    margin-left: 10px;
    width: 62px;
    display: flex;
    flex-direction: column;
    align-items: center;
    font-size: 12px;
    line-height: 18px;
}
.tr-note {
    position: relative;
    margin-left: 13px;
}
```
